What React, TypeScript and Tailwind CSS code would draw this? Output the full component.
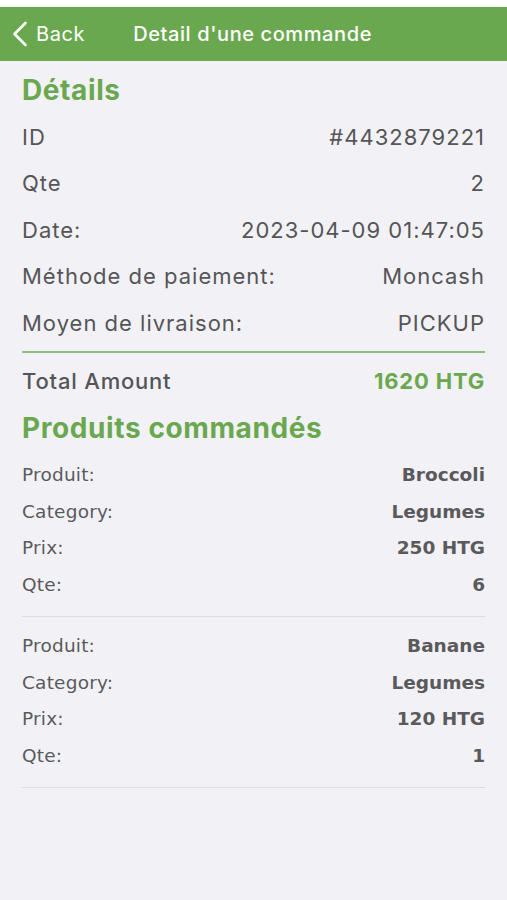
import React from "react";

const F = { fontFamily: 'Inter, "Open Sans", "Liberation Sans", Arial, sans-serif' };
const P = { fontFamily: '"DejaVu Sans", Verdana, sans-serif' };

function Row({ label, value }: { label: string; value: string }) {
  return (
    <div className="flex h-[46.5px] items-center justify-between text-[22px] tracking-[1px] text-[#555558]" style={F}>
      <span>{label}</span>
      <span>{value}</span>
    </div>
  );
}

function PRow({ label, value }: { label: string; value: string }) {
  return (
    <div className="flex h-[36.6px] items-center justify-between text-[18.5px] text-[#5a5a5c]" style={P}>
      <span className="tracking-[0.2px]">{label}</span>
      <span className="font-bold">{value}</span>
    </div>
  );
}

function Product({ name, cat, price, qte }: { name: string; cat: string; price: string; qte: string }) {
  return (
    <div className="border-b border-[#dcdce0] pb-[13px]">
      <PRow label="Produit:" value={name} />
      <PRow label="Category:" value={cat} />
      <PRow label="Prix:" value={price} />
      <PRow label="Qte:" value={qte} />
    </div>
  );
}

export default function App() {
  return (
    <div className="min-h-[900px] w-full bg-[#f2f2f6]">
      <div className="h-[7px] bg-white" />
      <div className="flex h-[54px] items-center bg-[#6aa84f] text-white" style={F}>
        <div className="flex items-center pl-[11px]">
          <svg width="18" height="28" viewBox="0 0 18 28" fill="none">
            <path d="M14.5 3 L3.5 14 L14.5 25" stroke="white" strokeWidth="2.6" strokeLinecap="round" strokeLinejoin="round" />
          </svg>
          <span className="ml-[7px] text-[20px] tracking-[0.6px]">Back</span>
        </div>
        <span className="ml-[48px] text-[20px] font-medium tracking-[0.6px]">Detail d'une commande</span>
      </div>
      <div className="px-[22px]">
        <div className="pt-[11px] pb-[6px] text-[28px] font-bold leading-[36px] tracking-[0.6px] text-[#6aa84f]" style={F}>
          Détails
        </div>
        <Row label="ID" value="#4432879221" />
        <Row label="Qte" value="2" />
        <Row label="Date:" value="2023-04-09 01:47:05" />
        <Row label="Méthode de paiement:" value="Moncash" />
        <Row label="Moyen de livraison:" value="PICKUP" />
        <div className="mt-[4px] h-[2px] bg-[#8fc07a]" />
        <div className="flex h-[57px] items-center justify-between text-[22px] font-medium tracking-[0.8px] text-[#555558]" style={F}>
          <span>Total Amount</span>
          <span className="font-bold text-[#6aa84f]">1620 HTG</span>
        </div>
        <div className="pb-[11px] text-[28px] font-bold leading-[36px] tracking-[0.6px] text-[#6aa84f]" style={F}>
          Produits commandés
        </div>
        <Product name="Broccoli" cat="Legumes" price="250 HTG" qte="6" />
        <div className="pt-[11px]">
          <Product name="Banane" cat="Legumes" price="120 HTG" qte="1" />
        </div>
      </div>
    </div>
  );
}
